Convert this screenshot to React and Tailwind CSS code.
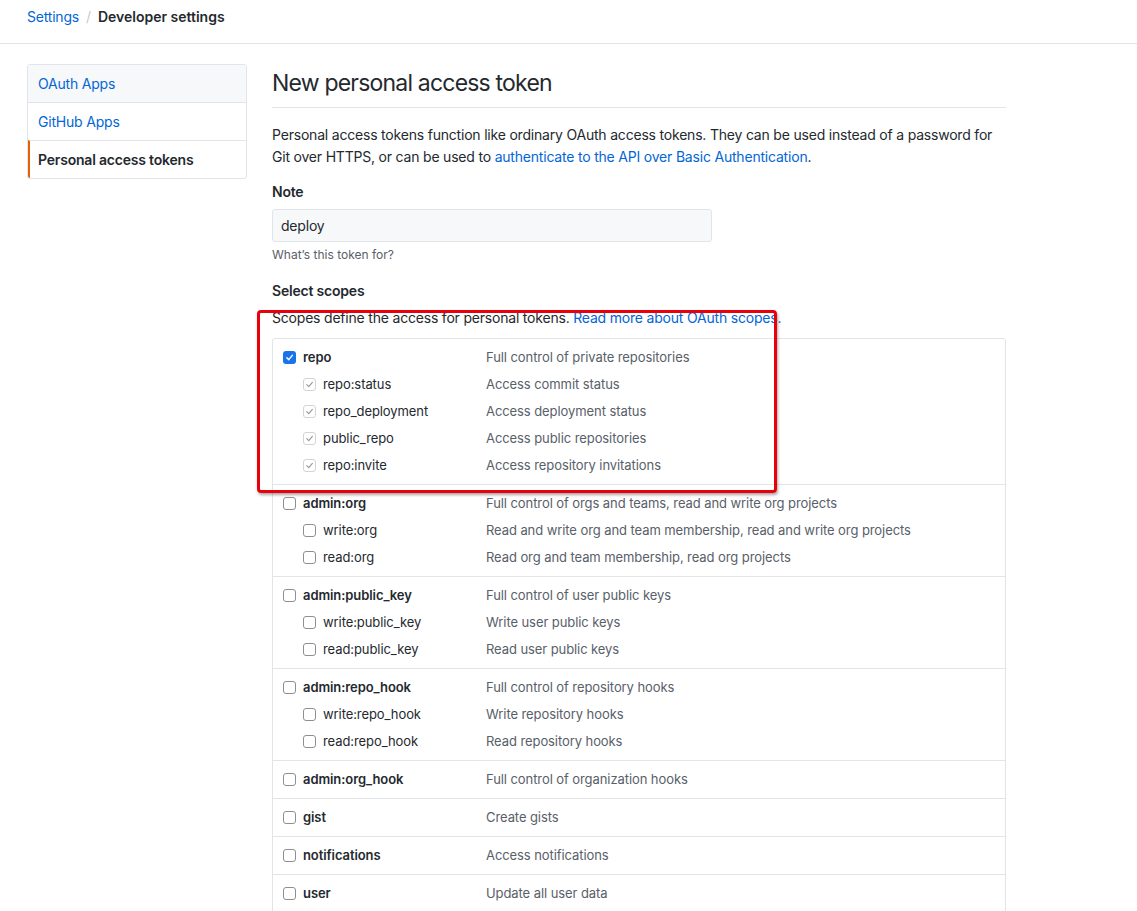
import React from "react";

const scopeGroups = [
  {
    name: "repo",
    desc: "Full control of private repositories",
    checked: true,
    children: [
      ["repo:status", "Access commit status"],
      ["repo_deployment", "Access deployment status"],
      ["public_repo", "Access public repositories"],
      ["repo:invite", "Access repository invitations"],
    ],
  },
  {
    name: "admin:org",
    desc: "Full control of orgs and teams, read and write org projects",
    children: [
      ["write:org", "Read and write org and team membership, read and write org projects"],
      ["read:org", "Read org and team membership, read org projects"],
    ],
  },
  {
    name: "admin:public_key",
    desc: "Full control of user public keys",
    children: [
      ["write:public_key", "Write user public keys"],
      ["read:public_key", "Read user public keys"],
    ],
  },
  {
    name: "admin:repo_hook",
    desc: "Full control of repository hooks",
    children: [
      ["write:repo_hook", "Write repository hooks"],
      ["read:repo_hook", "Read repository hooks"],
    ],
  },
  { name: "admin:org_hook", desc: "Full control of organization hooks", children: [] },
  { name: "gist", desc: "Create gists", children: [] },
  { name: "notifications", desc: "Access notifications", children: [] },
  { name: "user", desc: "Update all user data", children: [] },
];

// Checkbox in three states: empty, checked (blue), checked but disabled (grey)
function Box({ state }) {
  if (state === "checked") {
    return (
      <span className="w-[13px] h-[13px] rounded-[3px] bg-[#1a73e8] flex items-center justify-center shrink-0">
        <svg width="9" height="9" viewBox="0 0 10 10">
          <path d="M2 5.2 L4.2 7.4 L8.2 2.6" fill="none" stroke="white" strokeWidth="1.6" strokeLinecap="round" strokeLinejoin="round" />
        </svg>
      </span>
    );
  }
  if (state === "disabled") {
    return (
      <span className="w-[13px] h-[13px] rounded-[3px] border border-[#d4d4d4] bg-white flex items-center justify-center shrink-0">
        <svg width="9" height="9" viewBox="0 0 10 10">
          <path d="M2 5.2 L4.2 7.4 L8.2 2.6" fill="none" stroke="#9a9a9a" strokeWidth="1.3" strokeLinecap="round" strokeLinejoin="round" />
        </svg>
      </span>
    );
  }
  return <span className="w-[13px] h-[13px] rounded-[3px] border border-[#8f8f8f] bg-white shrink-0" />;
}

function ScopeRow({ name, desc, state, child }) {
  return (
    <div className="flex items-center h-[27px]">
      <div className={`flex items-center gap-[7px] w-[203px] ${child ? "pl-5" : ""}`}>
        <Box state={state} />
        <span className={child ? "text-[#24292e]" : "font-semibold text-[#24292e]"}>{name}</span>
      </div>
      <span className="text-[#586069]">{desc}</span>
    </div>
  );
}

export default function App() {
  return (
    <div className="relative bg-white min-h-[911px] text-[#24292e] text-[14px] tracking-[-0.2px] font-['Inter',sans-serif]">
      {/* Breadcrumb */}
      <div className="h-[44px] border-b border-[#e1e4e8] pl-[27px] pt-[7px] leading-[20px]">
        <a className="text-[#0366d6]">Settings</a>
        <span className="text-[#c6cbd1] mx-[7px]">/</span>
        <span className="font-semibold tracking-normal">Developer settings</span>
      </div>

      <div className="flex pl-[27px] pt-[20px] gap-[25px]">
        {/* Sidebar */}
        <div className="w-[220px] h-[115px] border border-[#e1e4e8] rounded-[3px] shrink-0 overflow-hidden">
          <div className="h-[37px] flex items-center pl-[10px] bg-[#f6f8fa] text-[#0366d6]">OAuth Apps</div>
          <div className="h-[38px] flex items-center pl-[10px] border-t border-[#e1e4e8] text-[#0366d6]">GitHub Apps</div>
          <div className="h-[38px] flex items-center pl-[8px] border-t border-[#e1e4e8] border-l-2 border-l-[#e36209] font-semibold">
            Personal access tokens
          </div>
        </div>

        {/* Main */}
        <div className="w-[734px]">
          <h2 className="text-[23px] tracking-[-0.8px] leading-[30px] pt-1 pb-[9px] border-b border-[#e1e4e8] font-normal">
            New personal access token
          </h2>
          <p className="mt-4 leading-[22px] whitespace-nowrap">
            Personal access tokens function like ordinary OAuth access tokens. They can be used instead of a password for
            <br />
            Git over HTTPS, or can be used to{" "}
            <a className="text-[#0366d6]">authenticate to the API over Basic Authentication</a>.
          </p>

          <div className="mt-[14px] font-semibold leading-[20px]">Note</div>
          <div className="mt-[7px] w-[440px] h-[33px] border border-[#e1e4e8] rounded-[3px] bg-[#f6f8fa] flex items-center px-2">
            deploy
          </div>
          <div className="mt-1 text-[12px] tracking-normal leading-[18px] text-[#586069]">What’s this token for?</div>

          <div className="mt-[17px] font-semibold leading-[20px]">Select scopes</div>
          <div className="mt-[7px] leading-[20px]">
            Scopes define the access for personal tokens.{" "}
            <a className="text-[#0366d6]">Read more about OAuth scopes.</a>
          </div>

          <div className="mt-[10px] border border-[#e1e4e8] rounded-[3px] text-[13px] tracking-[-0.08px]">
            {scopeGroups.map((g, i) => (
              <div key={g.name} className={`py-[5px] pl-[10px] ${i > 0 ? "border-t border-[#e1e4e8]" : ""}`}>
                <ScopeRow name={g.name} desc={g.desc} state={g.checked ? "checked" : "empty"} />
                {g.children.map(([n, d]) => (
                  <ScopeRow key={n} name={n} desc={d} child state={g.checked ? "disabled" : "empty"} />
                ))}
              </div>
            ))}
          </div>
        </div>
      </div>

      {/* Red annotation frame */}
      <div className="absolute left-[257px] top-[310px] w-[520px] h-[183px] border-[3px] border-[#e8000b] rounded-[4px] shadow-[1px_2px_3px_rgba(0,0,0,0.35)] pointer-events-none" />
    </div>
  );
}
